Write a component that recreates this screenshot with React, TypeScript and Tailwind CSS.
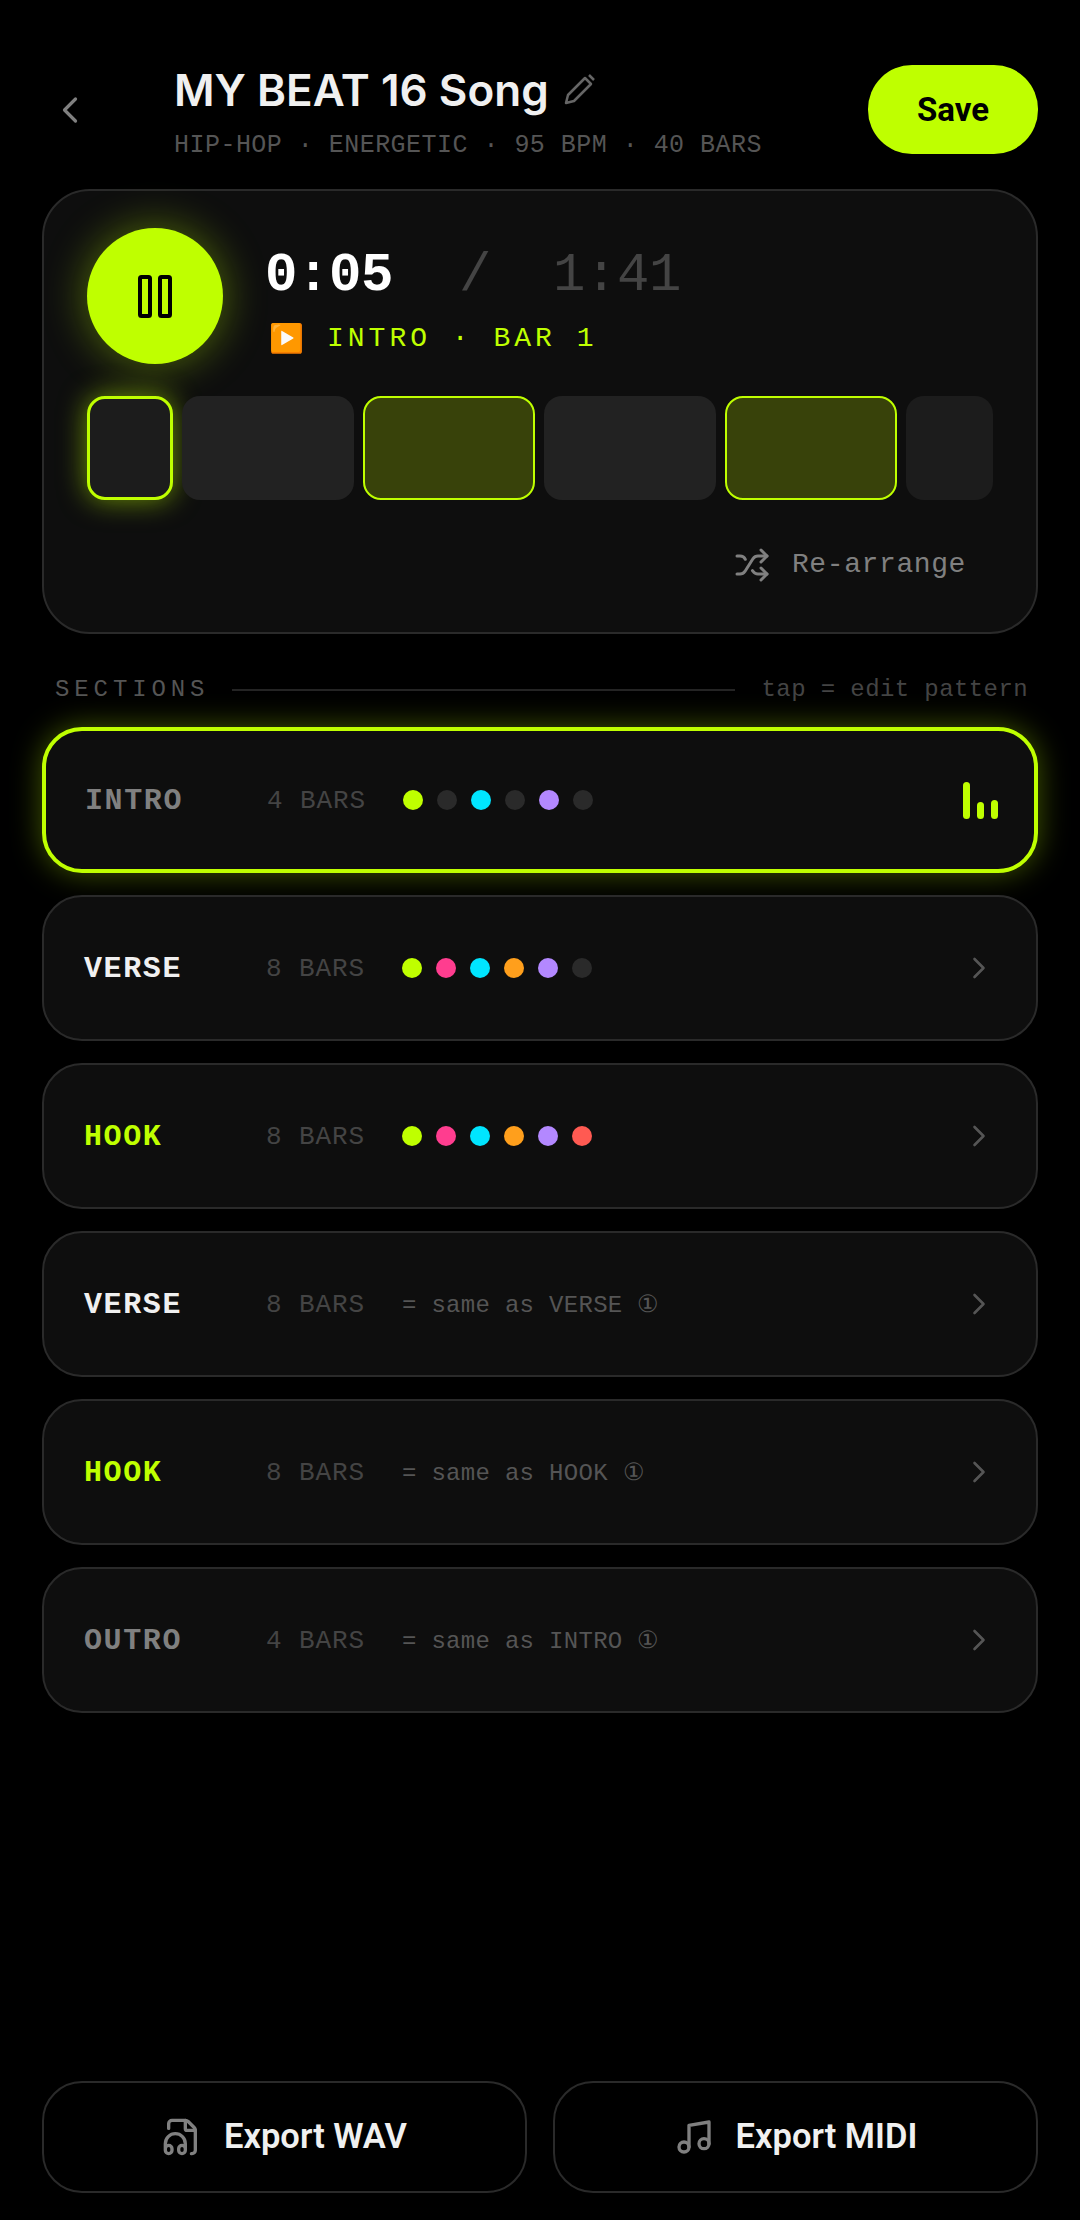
import React from 'react';
import { ChevronLeft, ChevronRight, FileAudio, Music, Shuffle } from 'lucide-react';

const mono = 'font-["Liberation_Mono",monospace]';

const L = 'bg-[#bfff00]';
const O = 'bg-[#2a2a2a]';
const P = 'bg-[#ff3d8f]';
const C = 'bg-[#00e5ff]';
const A = 'bg-[#ff9f1c]';
const V = 'bg-[#b388ff]';
const R = 'bg-[#ff5a52]';

interface Section {
  name: string;
  bars: string;
  nameClass: string;
  dots?: string[];
  same?: string;
  active?: boolean;
}

const sections: Section[] = [
  { name: 'INTRO', bars: '4 BARS', nameClass: 'text-[#808080]', dots: [L, O, C, O, V, O], active: true },
  { name: 'VERSE', bars: '8 BARS', nameClass: 'text-[#f0f0f0]', dots: [L, P, C, A, V, O] },
  { name: 'HOOK', bars: '8 BARS', nameClass: 'text-[#bfff00]', dots: [L, P, C, A, V, R] },
  { name: 'VERSE', bars: '8 BARS', nameClass: 'text-[#f0f0f0]', same: '= same as VERSE ①' },
  { name: 'HOOK', bars: '8 BARS', nameClass: 'text-[#bfff00]', same: '= same as HOOK ①' },
  { name: 'OUTRO', bars: '4 BARS', nameClass: 'text-[#808080]', same: '= same as INTRO ①' },
];

const SectionRow = ({ s }: { s: Section }) => (
  <div
    className={`h-[146px] rounded-[40px] bg-[#0e0e0e] flex items-center pr-[39px] ${mono} ${
      s.active
        ? 'border-4 border-[#bfff00] pl-[39px] shadow-[0_0_30px_rgba(191,255,0,0.35)]'
        : 'border-2 border-[#2a2a2a] pl-10'
    }`}
  >
    <div className={`w-[182px] pt-[3px] text-[30px] font-bold tracking-[1.6px] ${s.nameClass}`}>{s.name}</div>
    <div className="w-[136px] pt-[3px] text-[26px] tracking-[0.9px] text-[#444444]">{s.bars}</div>
    {s.dots && (
      <div className="flex gap-[14px]">
        {s.dots.map((d, i) => (
          <div key={i} className={`w-5 h-5 rounded-full ${d}`} />
        ))}
      </div>
    )}
    {s.same && <div className="pt-[3px] text-[24px] tracking-[0.3px] text-[#555555]">{s.same}</div>}
    <div className="ml-auto">
      {s.active ? (
        <div className="flex items-end gap-[7px] h-[37px] -mr-[3px]">
          <div className="w-[7px] h-[37px] rounded-full bg-[#bfff00]" />
          <div className="w-[7px] h-[17px] rounded-full bg-[#bfff00]" />
          <div className="w-[7px] h-[19px] rounded-full bg-[#bfff00]" />
        </div>
      ) : (
        <ChevronRight size={36} strokeWidth={1.75} className="text-[#555555]" />
      )}
    </div>
  </div>
);

export default function App() {
  return (
    <div className="w-[1080px] h-[2220px] bg-black flex flex-col px-[42px] overflow-hidden font-['Roboto',sans-serif]">
      {/* Header */}
      <div className="h-[189px] flex items-start">
        <div className="w-[132px] pt-[88px] pl-[6px]">
          <ChevronLeft size={44} strokeWidth={1.75} className="text-[#808080]" />
        </div>
        <div className="flex-1 pt-[60px]">
          <div className="flex items-center gap-[14px]">
            <span className="font-['Inter',sans-serif] font-semibold text-[44px] leading-[60px] text-[#f0f0f0]">MY BEAT 16 Song</span>
            <svg width="34" height="34" viewBox="0 0 34 34" fill="none" stroke="#666666" strokeWidth="2.5" className="-mt-[2px]">
              <path d="M3 31l2-8L22 6l6 6-17 17z" strokeLinejoin="round" />
              <path d="M26 3l5 5" />
            </svg>
          </div>
          <div className={`${mono} text-[25px] tracking-[0.47px] mt-[7px] text-[#555555]`}>
            HIP-HOP · ENERGETIC · 95 BPM · 40 BARS
          </div>
        </div>
        <button className="mt-[65px] w-[170px] h-[89px] rounded-[44px] bg-[#bfff00] text-black font-bold text-[33px]">
          Save
        </button>
      </div>

      {/* Player card */}
      <div className="h-[445px] rounded-[48px] border-2 border-[#2a2a2a] bg-[#0e0e0e] px-[43px] pt-[37px]">
        <div className="flex items-start gap-[42px]">
          <button className="w-[136px] h-[136px] rounded-full bg-[#bfff00] flex items-center justify-center shadow-[0_0_44px_rgba(191,255,0,0.4)]">
            <svg width="34" height="43" viewBox="0 0 34 43" fill="none" stroke="#000000" strokeWidth="4">
              <rect x="2" y="2" width="10" height="39" rx="1.5" />
              <rect x="22" y="2" width="10" height="39" rx="1.5" />
            </svg>
          </button>
          <div className={`${mono} pt-[18px]`}>
            <div className="flex items-center text-[54px] leading-[60px] tracking-[-0.4px]">
              <span className="font-bold text-white">0:05</span>
              <span className="ml-[66px] text-[#444444]">/</span>
              <span className="ml-[62px] text-[#444444]">1:41</span>
            </div>
            <div className="flex items-center mt-[13px] text-[28px] leading-[40px] tracking-[4px] text-[#bfff00]">
              <span className="font-['Noto_Color_Emoji',sans-serif] text-[28px] w-[62px] pl-[4px]">▶️</span>
              <span>INTRO · BAR 1</span>
            </div>
          </div>
        </div>

        {/* Arrangement strip */}
        <div className="flex gap-[9px] h-[104px] mt-8">
          <div className="w-[86px] rounded-[18px] bg-[#1c1c1c] border-[3px] border-[#bfff00] shadow-[0_0_28px_rgba(191,255,0,0.55)]" />
          <div className="w-[172px] rounded-[18px] bg-[#222222]" />
          <div className="w-[172px] rounded-[18px] bg-[#38420a] border-2 border-[#bfff00]" />
          <div className="w-[172px] rounded-[18px] bg-[#222222]" />
          <div className="w-[172px] rounded-[18px] bg-[#38420a] border-2 border-[#bfff00]" />
          <div className="w-[87px] rounded-[18px] bg-[#1c1c1c]" />
        </div>

        <div className={`flex items-center justify-end gap-[22px] mt-[44px] pr-[27px] text-[#808080] ${mono} text-[28px]`}>
          <Shuffle size={36} strokeWidth={2} />
          <span className="tracking-[0.6px]">Re-arrange</span>
        </div>
      </div>

      {/* Sections */}
      <div className={`flex items-center h-[93px] pt-[18px] pl-[13px] pr-[10px] ${mono} text-[#555555]`}>
        <span className="text-[24px] tracking-[4.9px]">SECTIONS</span>
        <div className="flex-1 h-[2px] bg-[#242424] ml-[23px] mr-[27px]" />
        <span className="text-[24px] tracking-[0.4px] text-[#444444]">tap = edit pattern</span>
      </div>

      <div className="flex flex-col gap-[22px]">
        {sections.map((s, i) => (
          <SectionRow key={i} s={s} />
        ))}
      </div>

      {/* Export */}
      <div className="mt-auto mb-[27px] flex gap-[26px]">
        <button className="flex-1 h-[112px] rounded-[40px] border-2 border-[#2a2a2a] flex items-center justify-center gap-[22px] text-[#f0f0f0] font-semibold text-[34.5px]">
          <FileAudio size={40} strokeWidth={2} className="text-[#808080]" />
          Export WAV
        </button>
        <button className="flex-1 h-[112px] rounded-[40px] border-2 border-[#2a2a2a] flex items-center justify-center gap-[22px] text-[#f0f0f0] font-semibold text-[34.5px]">
          <Music size={40} strokeWidth={2} className="text-[#808080]" />
          Export MIDI
        </button>
      </div>
    </div>
  );
}
